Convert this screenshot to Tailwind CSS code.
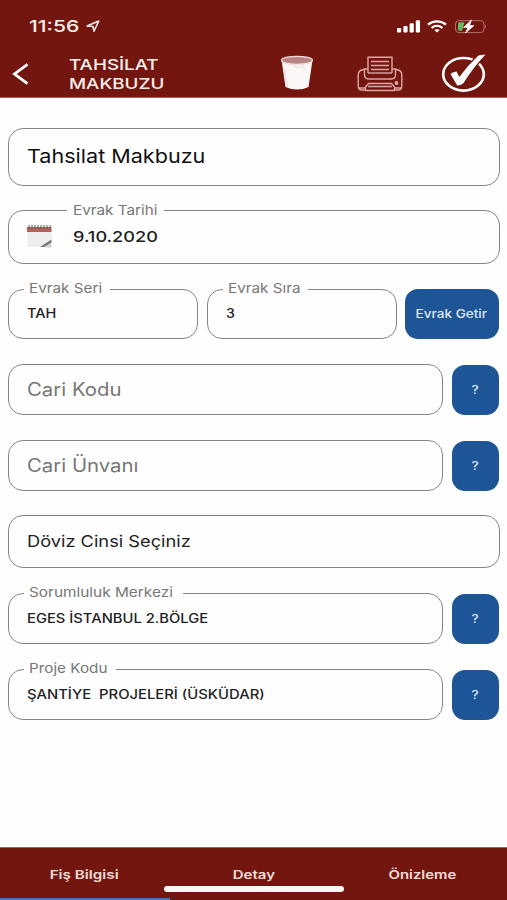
<!DOCTYPE html>
<html lang="tr">
<head>
<meta charset="utf-8">
<title>Tahsilat Makbuzu</title>
<script src="https://cdn.jsdelivr.net/npm/@tailwindcss/browser@4"></script>
</head>
<body class="bg-white font-['Inter','Liberation_Sans',sans-serif]">
<div class="w-[507px] h-[900px] flex flex-col overflow-hidden bg-[#fefefe] whitespace-nowrap">
  <header class="h-[98px] shrink-0 bg-[#741610] border-b border-[#a4605c] text-[#fdf0ec]">
    <div class="h-[52px] flex items-center justify-between pl-[29px] pr-[20px]">
      <div class="flex items-center">
        <span class="w-[57px] text-[16.5px] font-medium"><span class="inline-block origin-left scale-x-[1.28]">11:56</span></span>
        <svg class="w-[14px] h-[13px]" viewBox="0 0 14 13" fill="none" stroke="currentColor" stroke-width="1.5" stroke-linejoin="round"><path d="M1 6 12.8 1 8 11.3 7 6.5Z"/></svg>
      </div>
      <div class="flex items-center gap-[7px]">
        <svg class="w-[24px] h-[13px]" viewBox="0 0 24 13" fill="#fff"><rect x="1" y="8" width="4.2" height="4.5" rx="1"/><rect x="7.4" y="6" width="4.2" height="6.5" rx="1"/><rect x="13.6" y="3.3" width="4.2" height="9.2" rx="1"/><rect x="19.8" y="0.3" width="4.2" height="12.2" rx="1"/></svg>
        <svg class="w-[20px] h-[13px]" viewBox="0 0 20 13" fill="none" stroke="#fff" stroke-width="2.3"><path d="M1 4.6C6 .2 14 .2 19 4.6M4.6 8C7.8 5.2 12.2 5.2 15.4 8"/><path d="M7.3 10Q10 8.4 12.7 10L10 12.5Z" fill="#fff" stroke="none"/></svg>
        <svg class="w-[33px] h-[15px]" viewBox="0 0 33 15"><rect x="1.500" y="1.6" width="28.500" height="12" rx="3.5" fill="none" stroke="#b0716b"/><path d="M31 5.3q2 2.2 0 4.4z" fill="#b0716b"/><path d="M5 3.300H10.500L8 11.700H5Q4 11.700 4 10V5Q4 3.300 5 3.300Z" fill="#63b963"/><path d="M17.500 1 9.500 8.400H14L11.500 14 20 6.500H15.500Z" fill="#fff" stroke="#fff" stroke-width=".7"/></svg>
      </div>
    </div>
    <div class="h-[45px] flex items-start pl-[12px]">
      <svg class="w-[17px] h-[22px] mt-[11px]" viewBox="0 0 17 22" fill="none" stroke="#fff" stroke-width="2.800"><path d="M15.500 1.300 2.500 11 15.500 20.700"/></svg>
      <h1 class="ml-[40px] mt-[4px] w-[211px] text-[15px] leading-[18.500px] font-medium"><span class="block w-fit origin-left scale-x-[1.25]">TAHSİLAT<br>MAKBUZU</span></h1>
      <svg class="w-[34px] h-[36px] mt-[3px]" viewBox="0 0 34 36"><path d="M1.500 5 5.500 32Q17 37 28.500 32L32.500 5Z" fill="#fcf7f7"/><ellipse cx="17" cy="5.300" rx="15.500" ry="4" fill="#b98582" stroke="#f3dfdd" stroke-width="1.300"/><path d="M4.500 13 7.300 31.500" stroke="#e3d3d3" stroke-width=".8"/><path d="M14 11.500q5 1.500 10-.5M23 15l3-1" stroke="#ded0d0" stroke-width=".7" fill="none"/></svg>
      <svg class="w-[46px] h-[36px] ml-[43px] mt-[4px]" viewBox="0 0 46 36" fill="none" stroke="#d9a5a1" stroke-width="1.400"><path d="M11 17V1.200H35V17M14 5.500H32M14 9.500H32M14 13.500H32"/><path d="M11 13H7.500V18.500Q7.500 23 11.500 23H34.500Q38.500 23 38.500 18.500V13H35"/><path d="M11 17H35"/><path d="M7 13.500Q1.200 14 1.200 19V30Q1.200 34 5 34H9M39 13.500Q44.800 14 44.800 19V30Q44.800 34 41 34H37"/><path d="M8.500 34.500V31L11.500 27.500H34.500L37.500 31V34.500ZM11 30.500H35M2 32H8.500M37.500 32H44"/><circle cx="39.500" cy="27" r="1.200" fill="#f3d5d2"/></svg>
      <svg class="w-[46px] h-[40px] ml-[38px]" viewBox="0 0 46 40"><ellipse cx="22.500" cy="22.300" rx="20.300" ry="16.300" fill="none" stroke="#fff" stroke-width="2.600"/><path d="M44.500 2.500 37.500 3.500Q27 13 18.300 25L15.500 19.500Q12 19.500 9.500 22L16.200 33.500Q20 33.500 22.500 31Q33 14.500 44.500 2.500Z" fill="#fff" stroke="#741610" stroke-width="2.600" paint-order="stroke"/></svg>
    </div>
  </header>

  <main class="flex-1 pl-[8px] pr-[7px] pt-[30px]">
    <div class="h-[58px] border border-[#858585] rounded-[15px] pl-[18px] flex items-center text-[19px] text-[#111]"><span class="origin-left scale-x-[1.135]">Tahsilat Makbuzu</span></div>

    <fieldset class="mt-[24px] h-[54px] border border-[#858585] rounded-[15px] pl-[17px]">
      <legend class="ml-[41px] w-[97px] h-px flex items-center pl-[5.500px] text-[13.500px] text-[#777]"><span class="origin-left scale-x-[1.13]">Evrak Tarihi</span></legend>
      <div class="h-[53px] flex items-center">
        <svg class="w-[28px] h-[25px] mt-[-3px]" viewBox="0 0 28 25"><rect x="1.500" y="7" width="24" height="16" fill="#eee"/><path d="M1 3H25.500V8H1Z" fill="#b9605c"/><path d="M3 1V5M6 1V5M9 1V5M12 1V5M15 1V5M18 1V5M21 1V5M24 1V5" stroke="#655" stroke-width="1"/><path d="M14 23 25.500 15.500V18.500L18.500 23Z" fill="#777"/><path d="M18.500 23 25.500 18.500V24Z" fill="#d4d4d4"/></svg>
        <span class="ml-[19px] origin-left scale-x-[1.21] text-[15px] font-medium text-[#222]">9.10.2020</span>
      </div>
    </fieldset>

    <div class="mt-[25px] flex items-start">
      <fieldset class="w-[190px] h-[50px] border border-[#858585] rounded-[15px] pl-[18px]">
        <legend class="ml-[-3px] w-[86px] h-px flex items-center pl-[5px] text-[13.500px] text-[#777]"><span class="origin-left -translate-y-px scale-x-[1.13]">Evrak Seri</span></legend>
        <div class="h-[49px] flex items-center text-[12.500px] font-medium text-[#222]"><span class="origin-left scale-x-[1.16]">TAH</span></div>
      </fieldset>
      <fieldset class="ml-[9px] w-[190px] h-[50px] border border-[#858585] rounded-[15px] pl-[18px]">
        <legend class="ml-[-3px] w-[85px] h-px flex items-center pl-[5px] text-[13.500px] text-[#777]"><span class="origin-left -translate-y-px scale-x-[1.13]">Evrak Sıra</span></legend>
        <div class="h-[49px] flex items-center text-[12.500px] font-medium text-[#222]"><span class="origin-left scale-x-[1.13]">3</span></div>
      </fieldset>
      <button class="ml-[8px] w-[93.500px] h-[50px] rounded-[13px] bg-[#1e5596] text-[#dfeaf7] text-[11.500px] font-medium pt-[2px]"><span class="inline-block scale-x-[1.18]">Evrak Getir</span></button>
    </div>

    <div class="mt-[25px] flex items-start">
      <div class="w-[435px] h-[51px] border border-[#858585] rounded-[15px] pl-[18px] flex items-center text-[18px] text-[#777]"><span class="origin-left scale-x-[1.13]">Cari Kodu</span></div>
      <button class="ml-[9px] mt-px w-[47px] h-[50px] rounded-[13px] bg-[#1e5596] text-[#dfeaf7] text-[11.500px] font-medium pt-[2px]"><span class="inline-block scale-x-[1.18]">?</span></button>
    </div>

    <div class="mt-[25px] flex items-start">
      <div class="w-[435px] h-[51px] border border-[#858585] rounded-[15px] pl-[18px] flex items-center text-[18px] text-[#777]"><span class="origin-left scale-x-[1.13]">Cari Ünvanı</span></div>
      <button class="ml-[9px] mt-px w-[47px] h-[50px] rounded-[13px] bg-[#1e5596] text-[#dfeaf7] text-[11.500px] font-medium pt-[2px]"><span class="inline-block scale-x-[1.18]">?</span></button>
    </div>

    <div class="mt-[24px] h-[53px] border border-[#858585] rounded-[15px] pl-[18px] pb-px flex items-center text-[16px] text-[#222]"><span class="origin-left scale-x-[1.14]">Döviz Cinsi Seçiniz</span></div>

    <div class="mt-[25px] flex items-start">
      <fieldset class="w-[435px] h-[51px] border border-[#858585] rounded-[15px] pl-[18px]">
        <legend class="ml-[-3px] w-[159px] h-px flex items-center pl-[5px] text-[13.500px] text-[#777]"><span class="origin-left -translate-y-px scale-x-[1.14]">Sorumluluk Merkezi</span></legend>
        <div class="h-[50px] flex items-center text-[12.500px] font-medium text-[#222]"><span class="origin-left scale-x-[1.18]">EGES İSTANBUL 2.BÖLGE</span></div>
      </fieldset>
      <button class="ml-[9px] mt-px w-[47px] h-[50px] rounded-[13px] bg-[#1e5596] text-[#dfeaf7] text-[11.500px] font-medium pt-[2px]"><span class="inline-block scale-x-[1.18]">?</span></button>
    </div>

    <div class="mt-[25px] flex items-start">
      <fieldset class="w-[435px] h-[51px] border border-[#858585] rounded-[15px] pl-[18px]">
        <legend class="ml-[-3px] w-[92px] h-px flex items-center pl-[5px] text-[13.500px] text-[#777]"><span class="origin-left -translate-y-px scale-x-[1.13]">Proje Kodu</span></legend>
        <div class="h-[50px] flex items-center text-[12.500px] font-medium text-[#222] whitespace-pre"><span class="origin-left scale-x-[1.185]">ŞANTİYE  PROJELERİ (ÜSKÜDAR)</span></div>
      </fieldset>
      <button class="ml-[9px] mt-px w-[47px] h-[50px] rounded-[13px] bg-[#1e5596] text-[#dfeaf7] text-[11.500px] font-medium pt-[2px]"><span class="inline-block scale-x-[1.18]">?</span></button>
    </div>
  </main>

  <footer class="relative h-[53px] shrink-0 bg-[#741610] border-t border-[#a4605c]">
    <nav class="grid grid-cols-3 text-center pt-[17px] text-[12px] leading-[20px] font-semibold text-[#f6dcd8]">
      <span><span class="inline-block scale-x-[1.27]">Fiş Bilgisi</span></span>
      <span><span class="inline-block scale-x-[1.25]">Detay</span></span>
      <span><span class="inline-block scale-x-[1.24]">Önizleme</span></span>
    </nav>
    <div class="absolute left-[164px] top-[37.500px] w-[180px] h-[6px] rounded-full bg-[#fdf6f4]"></div>
    <div class="absolute left-0 bottom-0 w-[170px] h-[2.500px] bg-[#4c72b8]"></div>
  </footer>
</div>
</body>
</html>
